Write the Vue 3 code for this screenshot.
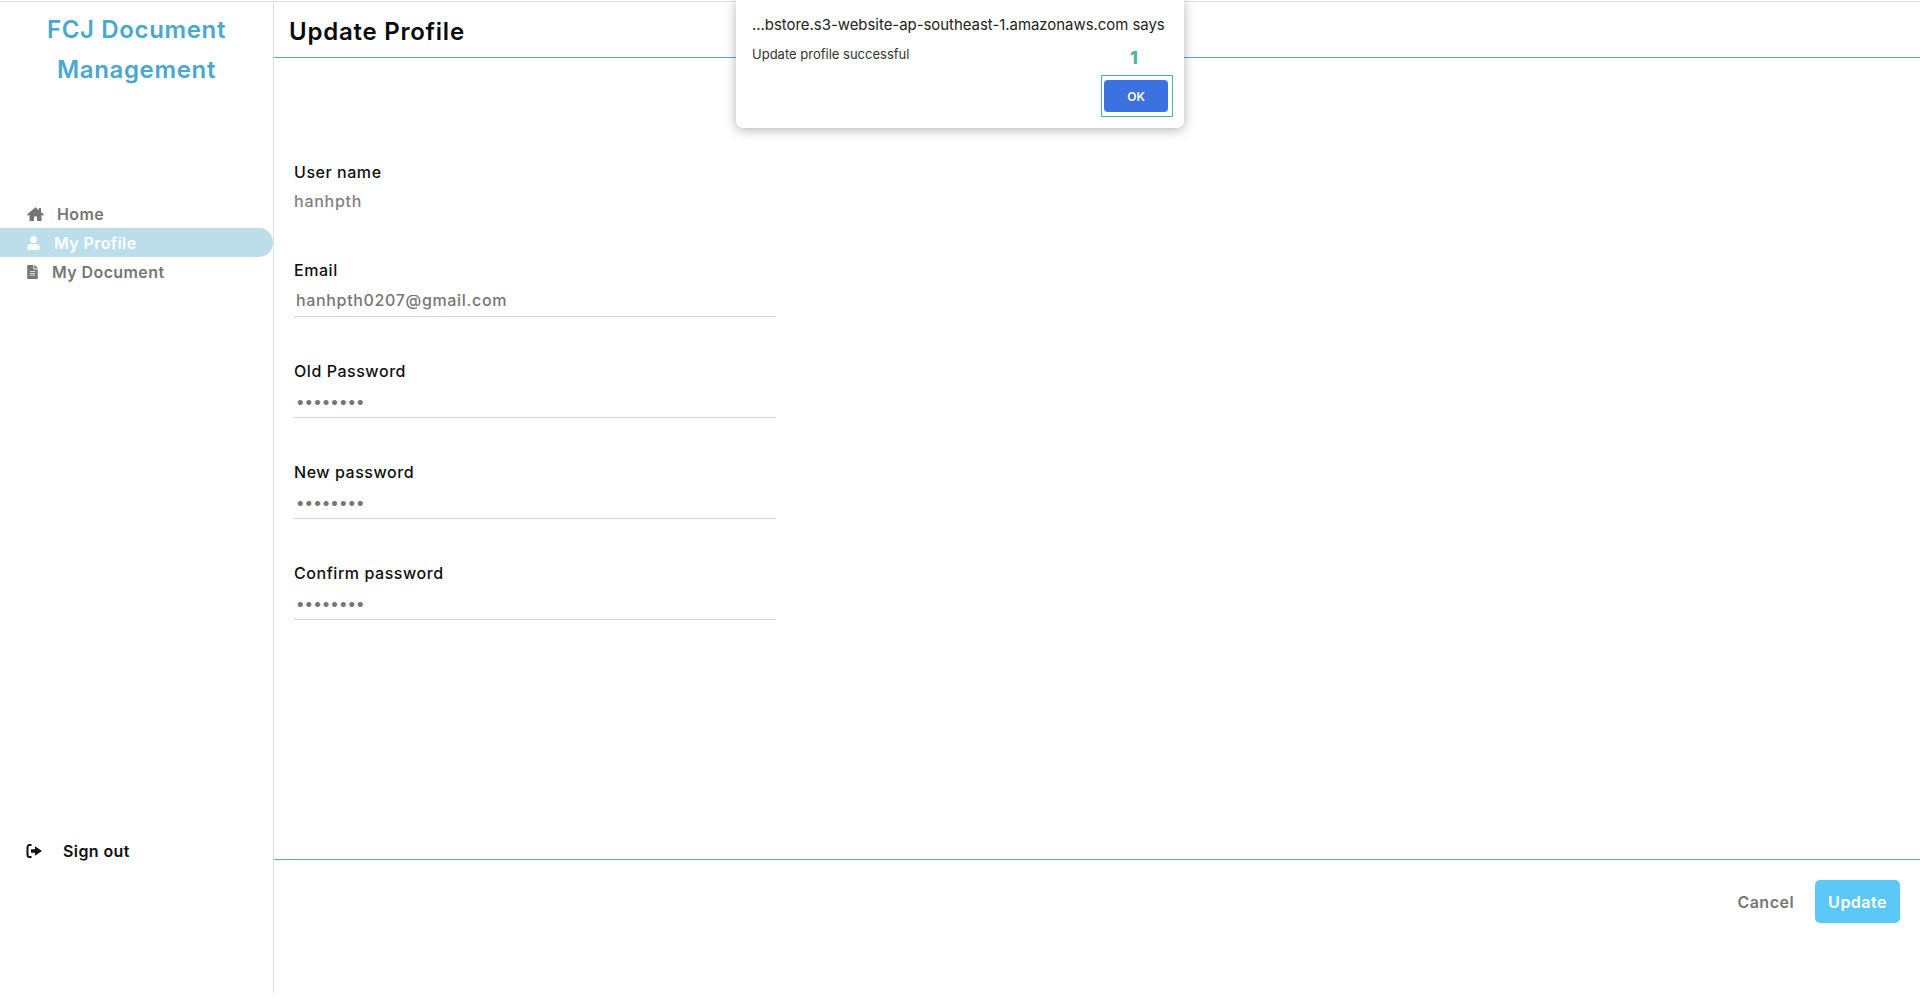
<script setup>
const navItems = [
  { label: "Home", icon: "home", gap: 13 },
  { label: "My Profile", icon: "user", gap: 14, active: true },
  { label: "My Document", icon: "file", gap: 14 },
];

const passwordFields = ["Old Password", "New password", "Confirm password"];
</script>

<template>
  <div class="page">
    <aside class="sidebar">
      <h1 class="brand">FCJ Document Management</h1>
      <nav class="nav">
        <a
          v-for="item in navItems"
          :key="item.label"
          class="nav-item"
          :class="{ active: item.active }"
        >
          <svg v-if="item.icon === 'home'" class="icon home" viewBox="0 0 17 14">
            <path fill="currentColor" d="M8.500 0.300L0 7.500l1 1.300L2.500 7.700V14h4.500V9.500h3V14h4.500V7.700L16 8.800l1-1.300-3-2.500V1h-2.200v2.300z" />
          </svg>
          <svg v-else-if="item.icon === 'user'" class="icon user" viewBox="0 0 448 512">
            <path fill="currentColor" d="M224 256a128 128 0 1 0 0-256 128 128 0 0 0 0 256zm89.600 32h-16.700a174.100 174.100 0 0 1-145.800 0h-16.700A134.400 134.400 0 0 0 0 422.400V464a48 48 0 0 0 48 48h352a48 48 0 0 0 48-48v-41.600A134.400 134.400 0 0 0 313.600 288z" />
          </svg>
          <svg v-else class="icon file" viewBox="0 0 384 512">
            <path fill="currentColor" d="M224 136V0H24A24 24 0 0 0 0 24v464a24 24 0 0 0 24 24h336a24 24 0 0 0 24-24V160H248a24 24 0 0 1-24-24zm64 236a12 12 0 0 1-12 12H108a12 12 0 0 1-12-12v-8a12 12 0 0 1 12-12h168a12 12 0 0 1 12 12zm0-64a12 12 0 0 1-12 12H108a12 12 0 0 1-12-12v-8a12 12 0 0 1 12-12h168a12 12 0 0 1 12 12zm0-72v8a12 12 0 0 1-12 12H108a12 12 0 0 1-12-12v-8a12 12 0 0 1 12-12h168a12 12 0 0 1 12 12zm96-114.100v6.100H256V0h6.100a24 24 0 0 1 17 7l97.900 98a24 24 0 0 1 7 16.900z" />
          </svg>
          <span :style="{ marginLeft: item.gap + 'px' }">{{ item.label }}</span>
        </a>
      </nav>
      <a class="signout">
        <svg class="icon signout-icon" viewBox="0 0 16 14">
          <path fill="none" stroke="currentColor" stroke-width="2" d="M5.500 1H3.500a2 2 0 0 0-2 2v8a2 2 0 0 0 2 2h2" />
          <path fill="currentColor" d="M5 5.300h4V2.300L16 7l-7 4.700v-3H5z" />
        </svg>
        <span>Sign out</span>
      </a>
    </aside>

    <main class="main">
      <header class="header">
        <h2>Update Profile</h2>
      </header>

      <form class="form" @submit.prevent>
        <div class="field static">
          <label>User name</label>
          <div class="value">hanhpth</div>
        </div>
        <div class="field">
          <label>Email</label>
          <input type="text" value="hanhpth0207@gmail.com" readonly />
        </div>
        <div v-for="name in passwordFields" :key="name" class="field">
          <label>{{ name }}</label>
          <input type="password" value="12345678" readonly />
        </div>
      </form>

      <footer class="footer">
        <button type="button" class="btn cancel">Cancel</button>
        <button type="button" class="btn update">Update</button>
      </footer>
    </main>

    <div class="dialog">
      <p class="dialog-title">...bstore.s3-website-ap-southeast-1.amazonaws.com says</p>
      <p class="dialog-text">Update profile successful</p>
      <span class="marker">1</span>
      <div class="ok-frame">
        <button type="button" class="ok">OK</button>
      </div>
    </div>
  </div>
</template>

<style>
html,
body {
  margin: 0;
  background: #fff;
}
</style>

<style scoped>
.page {
  position: relative;
  display: flex;
  margin-top: 1px;
  height: 992px;
  border-top: 1px solid #e0e0e0;
  box-sizing: border-box;
  font-family: Inter, "Noto Sans", sans-serif;
}

.sidebar {
  width: 274px;
  flex: none;
  display: flex;
  flex-direction: column;
  border-right: 1px solid #e0e0e0;
  box-sizing: border-box;
}

.brand {
  margin: 8px 0 0;
  padding: 0 30px;
  height: 80px;
  font-size: 24px;
  line-height: 40px;
  font-weight: 600;
  letter-spacing: 0.65px;
  text-align: center;
  color: #49a8cf;
}

.nav {
  margin-top: 109px;
  display: flex;
  flex-direction: column;
}

.nav-item {
  height: 29px;
  display: flex;
  align-items: center;
  padding-left: 27px;
  font-size: 16px;
  font-weight: 600;
  letter-spacing: 0.4px;
  color: #767676;
  border-radius: 0 14px 14px 0;
}

.nav-item.active {
  background: #bbdeea;
  color: #fff;
}

.icon {
  flex: none;
  display: block;
}

.home {
  width: 17px;
  height: 14px;
}

.user {
  width: 13px;
  height: 14px;
}

.file {
  width: 11px;
  height: 14px;
}

.signout {
  margin-top: auto;
  margin-bottom: 130px;
  display: flex;
  align-items: center;
  padding-left: 26px;
  height: 24px;
  font-size: 16px;
  font-weight: 600;
  letter-spacing: 0.4px;
  color: #111;
}

.signout-icon {
  width: 16px;
  height: 14px;
  margin-right: 21px;
}

.main {
  flex: 1;
  min-width: 0;
  display: flex;
  flex-direction: column;
}

.header {
  height: 56px;
  box-sizing: border-box;
  border-bottom: 1px solid #5da3cc;
  padding: 13px 15px 0;
}

.header h2 {
  margin: 0;
  font-size: 24px;
  line-height: 34px;
  font-weight: 600;
  letter-spacing: 0.76px;
  color: #0a0a0a;
}

.form {
  flex: 1;
  padding: 102px 20px 0;
  display: flex;
  flex-direction: column;
  gap: 42px;
}

.field {
  width: 482px;
  display: flex;
  flex-direction: column;
}

.field label {
  height: 24px;
  font-size: 16px;
  line-height: 24px;
  font-weight: 500;
  letter-spacing: 0.55px;
  color: #0f0f0f;
}

.value {
  margin-top: 5px;
  height: 24px;
  font-size: 16px;
  line-height: 24px;
  font-weight: 500;
  letter-spacing: 0.75px;
  color: #808080;
  margin-bottom: 3px;
}

.field input {
  height: 32px;
  margin-top: 2px;
  padding: 0 2px;
  border: 0;
  border-bottom: 1px solid #d4d4d4;
  outline: 0;
  font-family: inherit;
  font-size: 16px;
  font-weight: 500;
  letter-spacing: 0.66px;
  color: #767676;
  background: transparent;
  box-sizing: content-box;
  width: 478px;
}

.field input[type="password"] {
  letter-spacing: 0.05px;
}

.footer {
  height: 134px;
  flex: none;
  box-sizing: border-box;
  border-top: 1px solid #5da3cc;
  padding: 20px 20px 0 0;
  display: flex;
  justify-content: flex-end;
  align-items: flex-start;
  gap: 8px;
}

.btn {
  height: 43px;
  border: 0;
  border-radius: 5px;
  padding: 0 13px;
  font-family: inherit;
  font-size: 16px;
  font-weight: 600;
  letter-spacing: 0.5px;
  background: transparent;
}

.cancel {
  color: #767676;
}

.update {
  background: #5cc8f7;
  color: #fff;
}

.dialog {
  position: absolute;
  left: 736px;
  top: -2px;
  width: 448px;
  height: 128px;
  background: #fff;
  border-radius: 0 0 7px 7px;
  box-shadow: 0 2px 12px rgba(0, 0, 0, 0.3);
}

.dialog-title {
  margin: 0;
  position: absolute;
  left: 16px;
  top: 16px;
  font-size: 14.9px;
  line-height: 18px;
  color: #222;
  white-space: nowrap;
}

.dialog-text {
  margin: 0;
  position: absolute;
  left: 16px;
  top: 46px;
  font-size: 13px;
  line-height: 17px;
  color: #333;
}

.marker {
  position: absolute;
  left: 394px;
  top: 48px;
  font-size: 18px;
  line-height: 20px;
  font-weight: 800;
  color: #4fb596;
  text-shadow: 0 0 2px #fff;
}

.ok-frame {
  position: absolute;
  left: 365px;
  top: 75px;
  width: 72px;
  height: 42px;
  box-sizing: border-box;
  border: 1px solid #4fb596;
  padding: 4px 2px 0;
}

.ok {
  display: block;
  width: 64px;
  height: 32px;
  padding: 0;
  border: 0;
  border-radius: 4px;
  background: #3b72e0;
  color: #fff;
  font-family: inherit;
  font-size: 12px;
  font-weight: 600;
}
</style>
